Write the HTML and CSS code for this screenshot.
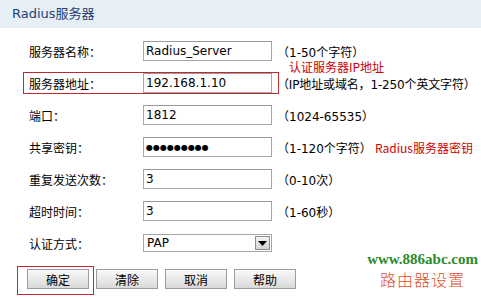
FILE: index.html
```html
<!DOCTYPE html>
<html lang="zh-CN">
<head>
<meta charset="utf-8">
<title>Radius服务器</title>
<link rel="stylesheet" href="styles.css">
</head>
<body>
<div class="page">
  <div class="title-bar">Radius服务器</div>
  <form class="form">
    <div class="row">
      <label class="label">服务器名称：</label>
      <input class="field" type="text" value="Radius_Server">
      <span class="hint">（1-50个字符）</span>
      <span class="note note-ip">认证服务器IP地址</span>
    </div>
    <div class="row row-marked">
      <label class="label">服务器地址：</label>
      <input class="field" type="text" value="192.168.1.10">
      <span class="hint hint-long">（IP地址或域名，1-250个英文字符）</span>
    </div>
    <div class="row">
      <label class="label">端口：</label>
      <input class="field" type="text" value="1812">
      <span class="hint">（1024-65535）</span>
    </div>
    <div class="row">
      <label class="label">共享密钥：</label>
      <div class="field dots">●●●●●●●●●</div>
      <span class="hint">（1-120个字符）</span>
      <span class="note note-key">Radius服务器密钥</span>
    </div>
    <div class="row">
      <label class="label">重复发送次数：</label>
      <input class="field" type="text" value="3">
      <span class="hint">（0-10次）</span>
    </div>
    <div class="row">
      <label class="label">超时时间：</label>
      <input class="field" type="text" value="3">
      <span class="hint">（1-60秒）</span>
    </div>
    <div class="row">
      <label class="label">认证方式：</label>
      <div class="select">
        <span class="select-value">PAP</span>
        <span class="select-btn"><svg width="9" height="5" viewBox="0 0 9 5"><path d="M0 0h9L4.5 5z" fill="#000"/></svg></span>
      </div>
    </div>
    <div class="buttons">
      <button type="button" class="btn btn-marked">确定</button>
      <button type="button" class="btn">清除</button>
      <button type="button" class="btn">取消</button>
      <button type="button" class="btn">帮助</button>
    </div>
  </form>
  <div class="watermark">
    <div class="wm-url">www.886abc.com</div>
    <div class="wm-cn">路由器设置</div>
  </div>
</div>
</body>
</html>
```

FILE: styles.css
```css
html, body {
  margin: 0;
  padding: 0;
  background: #fff;
}
.page {
  position: relative;
  width: 481px;
  height: 298px;
  overflow: hidden;
  font-family: "DejaVu Sans", "Noto Sans CJK SC", sans-serif;
  font-size: 12px;
  color: #000;
}
.title-bar {
  height: 28px;
  line-height: 28px;
  background: #e6eef6;
  color: #1f4270;
  font-size: 13px;
  padding-left: 12px;
}
.form {
  padding: 7px 0 0 29px;
  margin: 0;
}
.row {
  position: relative;
  height: 32px;
  display: flex;
  align-items: center;
}
.label {
  width: 114px;
  flex: none;
  font-family: "Noto Sans CJK SC", sans-serif;
  font-size: 12px;
}
.field {
  box-sizing: border-box;
  width: 129px;
  height: 20px;
  margin: 0;
  padding: 0 2px;
  border: 1px solid #a7a6aa;
  border-top-color: #9a999d;
  font-family: "DejaVu Sans", sans-serif;
  font-size: 12px;
  color: #000;
  background: #fff;
  outline: none;
  flex: none;
}
.dots {
  display: flex;
  align-items: center;
  font-size: 8px;
  padding-left: 2px;
}
.hint {
  margin-left: 5px;
  white-space: nowrap;
  flex: none;
}
.hint-long {
  letter-spacing: -0.15px;
}
.note {
  position: absolute;
  color: #d00000;
  font-family: "Noto Sans CJK SC", sans-serif;
  font-size: 12px;
  white-space: nowrap;
}
.note-ip {
  left: 260px;
  top: 23px;
}
.note-key {
  left: 346px;
  top: 8px;
}
.row-marked::before {
  content: "";
  position: absolute;
  left: -6px;
  top: 5px;
  width: 256px;
  height: 22px;
  box-sizing: border-box;
  border: 1px solid #c0282d;
}
.select {
  box-sizing: border-box;
  width: 129px;
  height: 18px;
  border: 1px solid #a7a6aa;
  display: flex;
  align-items: center;
  justify-content: space-between;
  padding: 0 1px 0 3px;
  background: #fff;
}
.select-value {
  font-family: "DejaVu Sans", sans-serif;
  font-size: 12px;
}
.select-btn {
  box-sizing: border-box;
  width: 15px;
  height: 14px;
  border: 1px solid #8d8d8d;
  background: linear-gradient(#f3f3f3, #d4d4d4);
  display: flex;
  align-items: center;
  justify-content: center;
}
.buttons {
  display: flex;
  gap: 7px;
  margin-top: 10px;
  margin-left: -2px;
}
.btn {
  position: relative;
  box-sizing: border-box;
  width: 62px;
  height: 20px;
  margin: 0;
  padding: 0;
  border: 1px solid #9c9c9c;
  background: linear-gradient(#fafafa, #e6e6e6 60%, #d8d8d8);
  font-family: "Noto Sans CJK SC", sans-serif;
  font-size: 12px;
  color: #000;
}
.btn-marked::before {
  content: "";
  position: absolute;
  left: -11px;
  top: -4px;
  width: 77px;
  height: 29px;
  box-sizing: border-box;
  border: 1px solid #c0282d;
}
.watermark {
  position: absolute;
  right: 3px;
  top: 250px;
  text-align: center;
}
.wm-url {
  font-family: "Liberation Serif", serif;
  font-weight: bold;
  font-size: 15px;
  color: #2b8a2b;
  line-height: 18px;
}
.wm-cn {
  font-family: "Noto Sans CJK SC", sans-serif;
  font-weight: 300;
  font-size: 16px;
  letter-spacing: 1px;
  color: #e2502a;
  line-height: 22px;
}
```
